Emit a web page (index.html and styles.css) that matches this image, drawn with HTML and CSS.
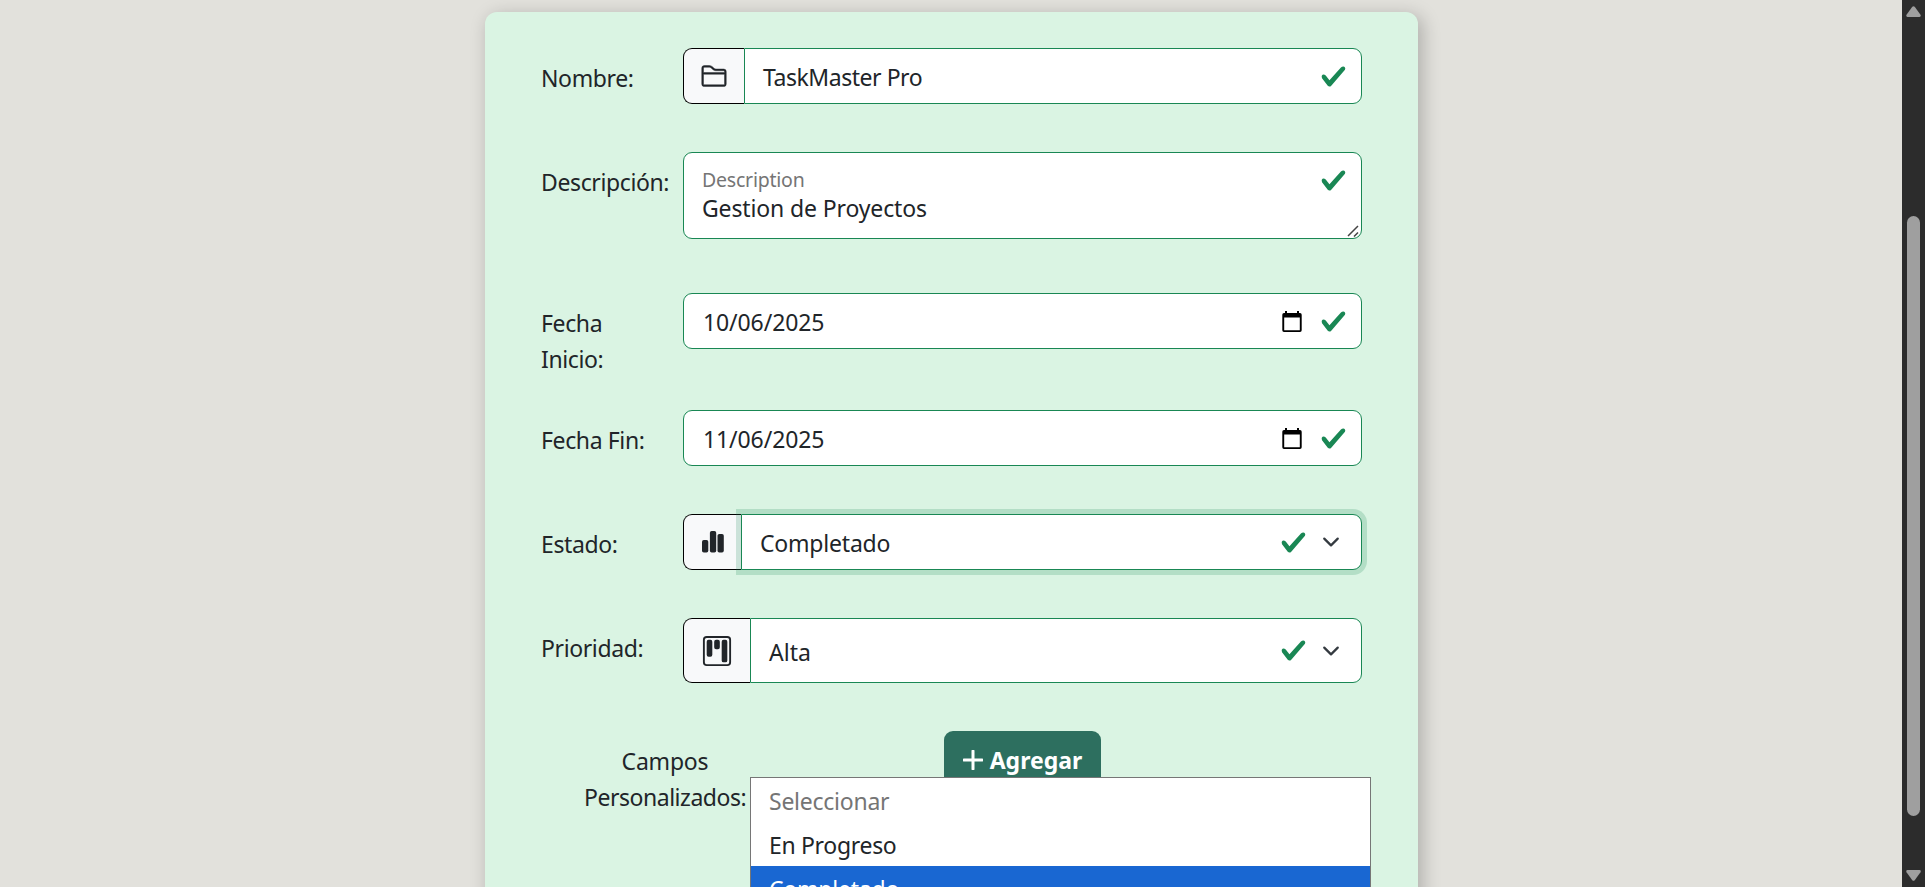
FILE: index.html
```html
<!DOCTYPE html>
<html lang="es">
<head>
<meta charset="utf-8">
<title>TaskMaster Pro</title>
<link rel="stylesheet" href="styles.css">
</head>
<body>
<svg class="sprite" aria-hidden="true">
  <symbol id="check" viewBox="0 0 8 8"><path d="M2.3 6.73.6 4.53c-.4-1.04.46-1.4 1.1-.8l1.1 1.4 3.4-3.8c.6-.63 1.6-.27 1.2.7l-4 4.6c-.43.5-.8.4-1.1.1z"/></symbol>
  <symbol id="chevron" viewBox="0 0 16 16"><path d="m2 5 6 6 6-6" fill="none" stroke="#343a40" stroke-width="2" stroke-linecap="round" stroke-linejoin="round"/></symbol>
  <symbol id="calendar" viewBox="0 0 20 21"><path d="M3 0h2v2h10V0h2v2h1a1.7 1.7 0 0 1 1.7 1.7v15.600A1.7 1.7 0 0 1 18 21H2A1.7 1.7 0 0 1 .3 19.300V3.700A1.700 1.700 0 0 1 2 2h1zM2.200 6.500V19.200h15.600V6.500z" fill-rule="evenodd"/></symbol>
</svg>
<div class="page">
  <main class="viewport">
    <form class="card">
      <div class="row">
        <label class="label"><span class="t-nombre">Nombre:</span></label>
        <div class="field">
          <span class="addon addon-folder"><svg width="28" height="28" viewBox="0 0 16 16"><path d="M1 3.500A1.500 1.500 0 0 1 2.500 2h2.764c.958 0 1.760.560 2.311 1.184C7.985 3.648 8.480 4 9 4h4.500A1.500 1.500 0 0 1 15 5.500v7a1.500 1.500 0 0 1-1.500 1.500h-11A1.500 1.500 0 0 1 1 12.500zM2.500 3a.5.5 0 0 0-.5.5V6h12v-.5a.5.5 0 0 0-.5-.5H9c-.964 0-1.710-.629-2.174-1.154C6.374 3.334 5.820 3 5.264 3zM14 7H2v5.500a.5.5 0 0 0 .5.5h11a.5.5 0 0 0 .5-.5z"/></svg></span>
          <div class="control joined"><span class="value t-task">TaskMaster Pro</span><svg class="check"><use href="#check"/></svg></div>
        </div>
      </div>
      <div class="row row-description">
        <label class="label"><span class="t-descripcion">Descripción:</span></label>
        <div class="field">
          <div class="control textarea">
            <div class="textarea-text"><span class="floating">Description</span><span class="t-gestion">Gestion de Proyectos</span></div>
            <svg class="check"><use href="#check"/></svg>
            <svg class="grip" viewBox="0 0 12 12"><path d="M1 11 11 1M7 11.500 11 7.500"/></svg>
          </div>
        </div>
      </div>
      <div class="row row-start">
        <label class="label"><span class="t-fecha">Fecha<br>Inicio:</span></label>
        <div class="field"><div class="control"><span class="value t-date">10/06/2025</span><svg class="calendar"><use href="#calendar"/></svg><svg class="check"><use href="#check"/></svg></div></div>
      </div>
      <div class="row">
        <label class="label"><span class="t-fin">Fecha Fin:</span></label>
        <div class="field"><div class="control"><span class="value t-date">11/06/2025</span><svg class="calendar"><use href="#calendar"/></svg><svg class="check"><use href="#check"/></svg></div></div>
      </div>
      <div class="row">
        <label class="label"><span class="t-estado">Estado:</span></label>
        <div class="field">
          <span class="addon addon-bars"><svg width="22" height="22" viewBox="0 0 22 22"><rect y="9" width="6.300" height="12.500" rx="1.800"/><rect x="7.900" width="6.300" height="21.500" rx="1.800"/><rect x="15.500" y="3" width="6.300" height="18.500" rx="1.800"/></svg></span>
          <div class="control joined select focused"><span class="value t-completado">Completado</span><svg class="check"><use href="#check"/></svg><svg class="chevron"><use href="#chevron"/></svg></div>
        </div>
      </div>
      <div class="row row-priority">
        <label class="label"><span class="t-prioridad">Prioridad:</span></label>
        <div class="field">
          <span class="addon addon-kanban"><svg width="30" height="30" viewBox="0 0 16 16"><path d="M13.500 1a1 1 0 0 1 1 1v12a1 1 0 0 1-1 1h-11a1 1 0 0 1-1-1V2a1 1 0 0 1 1-1zm-11-1a2 2 0 0 0-2 2v12a2 2 0 0 0 2 2h11a2 2 0 0 0 2-2V2a2 2 0 0 0-2-2z"/><path d="M6.500 3a1 1 0 0 1 1-1h1a1 1 0 0 1 1 1v3a1 1 0 0 1-1 1h-1a1 1 0 0 1-1-1zm-4 0a1 1 0 0 1 1-1h1a1 1 0 0 1 1 1v7a1 1 0 0 1-1 1h-1a1 1 0 0 1-1-1zm8 0a1 1 0 0 1 1-1h1a1 1 0 0 1 1 1v10a1 1 0 0 1-1 1h-1a1 1 0 0 1-1-1z"/></svg></span>
          <div class="control joined select"><span class="value t-alta">Alta</span><svg class="check"><use href="#check"/></svg><svg class="chevron"><use href="#chevron"/></svg></div>
        </div>
      </div>
      <div class="row row-custom">
        <label class="label label-custom"><span class="t-campos">Campos</span><br><span class="t-personalizados">Personalizados:</span></label>
        <button type="button" class="button"><svg width="20" height="20" viewBox="0 0 20 20"><path d="M10 1v18M1 10h18"/></svg><span class="t-agregar">Agregar</span></button>
      </div>
      <div class="actions"><div class="button submit"></div></div>
    </form>
    <div class="menu">
      <div class="option disabled"><span class="t-seleccionar">Seleccionar</span></div>
      <div class="option"><span class="t-progreso">En Progreso</span></div>
      <div class="option selected"><span class="t-completado">Completado</span></div>
    </div>
  </main>
  <aside class="scrollbar">
    <svg width="15" height="11" viewBox="0 0 15 11"><path d="M6.300.8Q7.500-.5 8.700.8L14.500 8.800Q15.300 10.800 13.500 11H1.500Q-.3 10.800.5 8.800z"/></svg>
    <div class="thumb"></div>
    <svg class="down" width="15" height="11" viewBox="0 0 15 11"><path d="M6.300 10.200Q7.500 11.500 8.700 10.200L14.500 2.200Q15.300.2 13.500 0H1.500Q-.3.2.5 2.200z"/></svg>
  </aside>
</div>
</body>
</html>
```
FILE: styles.css
```css
* { box-sizing: border-box; }
body {
  margin: 0;
  height: 887px;
  overflow: hidden;
  background: #e2e1dc;
  color: #212529;
  font-family: "Noto Sans", "Open Sans", sans-serif;
  font-size: 23px;
  line-height: 36px;
}
.sprite { display: none; }
svg { flex: none; display: block; fill: currentColor; }
.page { display: flex; height: 887px; }
.viewport { position: relative; flex: 1; height: 887px; overflow: hidden; padding-top: 12px; }
.card {
  width: 933px;
  height: 1100px;
  margin-left: 485px;
  padding: 36px 56px 0 55px;
  border-radius: 12px;
  background: #daf4e3;
  box-shadow: 4px 4px 18px 1px rgba(0, 0, 0, .22);
}
.row { display: grid; grid-template-columns: 143px 679px; align-items: start; margin-bottom: 48px; }
.row-description { margin-bottom: 54px; }
.row-start { height: 117px; margin-bottom: 0; }
.row-custom { height: 72px; margin-bottom: 58px; }
.label { padding: 12px 0 0 1px; letter-spacing: -.38px; white-space: nowrap; }
.label-custom { width: 162px; margin-left: 44px; padding-left: 0; text-align: center; }
.t-campos { letter-spacing: -.2px; }
.t-personalizados { letter-spacing: -.47px; }
.field { display: flex; height: 56px; }
.row-description .field { height: 87px; }
.row-priority .field { height: 65px; }
.addon {
  display: flex;
  align-items: center;
  border: 1px solid #000;
  border-right: 0;
  border-radius: 9px 0 0 9px;
  background: #f8f9fa;
}
.addon-folder { width: 61px; padding: 0 0 0 16px; }
.addon-folder svg { stroke: currentColor; stroke-width: .25; }
.addon-bars { width: 58px; padding-left: 18px; }
.addon-kanban { width: 67px; padding-left: 18px; }
.control {
  display: flex;
  flex: 1;
  align-items: center;
  padding: 0 14px 0 19px;
  border: 1px solid #198754;
  border-radius: 9px;
  background: #fff;
}
.control.joined { padding-left: 18px; border-radius: 0 9px 9px 0; }
.value { flex: 1; padding-top: 2px; white-space: nowrap; }
.row-priority .value { padding-top: 3px; }
.t-task { letter-spacing: -.46px; }
.t-gestion { letter-spacing: -.13px; }
.t-date { letter-spacing: -.1px; }
.t-completado { letter-spacing: -.2px; }
.t-seleccionar { letter-spacing: -.25px; }
.t-progreso { letter-spacing: -.32px; }
.check { width: 27px; height: 27px; color: #198754; }
.calendar { width: 20px; height: 21px; margin-right: 18px; color: #000; }
.chevron { width: 18px; height: 18px; margin-left: 15px; }
.control.select { padding-right: 21px; }
.focused { box-shadow: 0 0 0 5px rgba(25, 135, 84, .2); }
.textarea { position: relative; align-items: flex-start; padding-top: 14px; padding-left: 18px; }
.textarea-text { display: flex; flex: 1; flex-direction: column; line-height: 30px; margin-top: -1px; white-space: nowrap; }
.floating { color: #757575; font-size: 19.500px; line-height: 27px; letter-spacing: -.22px; }
.grip { position: absolute; right: 2px; bottom: 1px; width: 12px; height: 12px; fill: none; stroke: #444; stroke-width: 1.500; }
.button {
  display: flex;
  align-items: center;
  justify-self: center;
  justify-content: center;
  gap: 7px;
  width: 157px;
  height: 56px;
  padding: 2px 0 0;
  border: 0;
  border-radius: 9px;
  background: #2d6f5f;
  color: #fff;
  font: 700 23px/36px "Noto Sans", "Open Sans", sans-serif;
}
.button svg { fill: none; stroke: #fff; stroke-width: 3; stroke-linecap: round; }
.actions { padding-left: 206px; }
.menu {
  position: absolute;
  top: 777px;
  left: 750px;
  width: 621px;
  height: 180px;
  border: 1px solid #767676;
  background: #fff;
}
.option { height: 44px; padding: 5px 18px 0; white-space: nowrap; }
.option.disabled { color: #757575; }
.option.selected { background: #1967d2; color: #fff; }
.scrollbar {
  display: flex;
  flex-direction: column;
  align-items: center;
  width: 23px;
  padding-top: 6px;
  background: #2c2c2c;
  color: #9f9f9f;
}
.thumb { width: 13px; height: 600px; margin: 199px 0 54px; border-radius: 7px; background: #9f9f9f; }
```
